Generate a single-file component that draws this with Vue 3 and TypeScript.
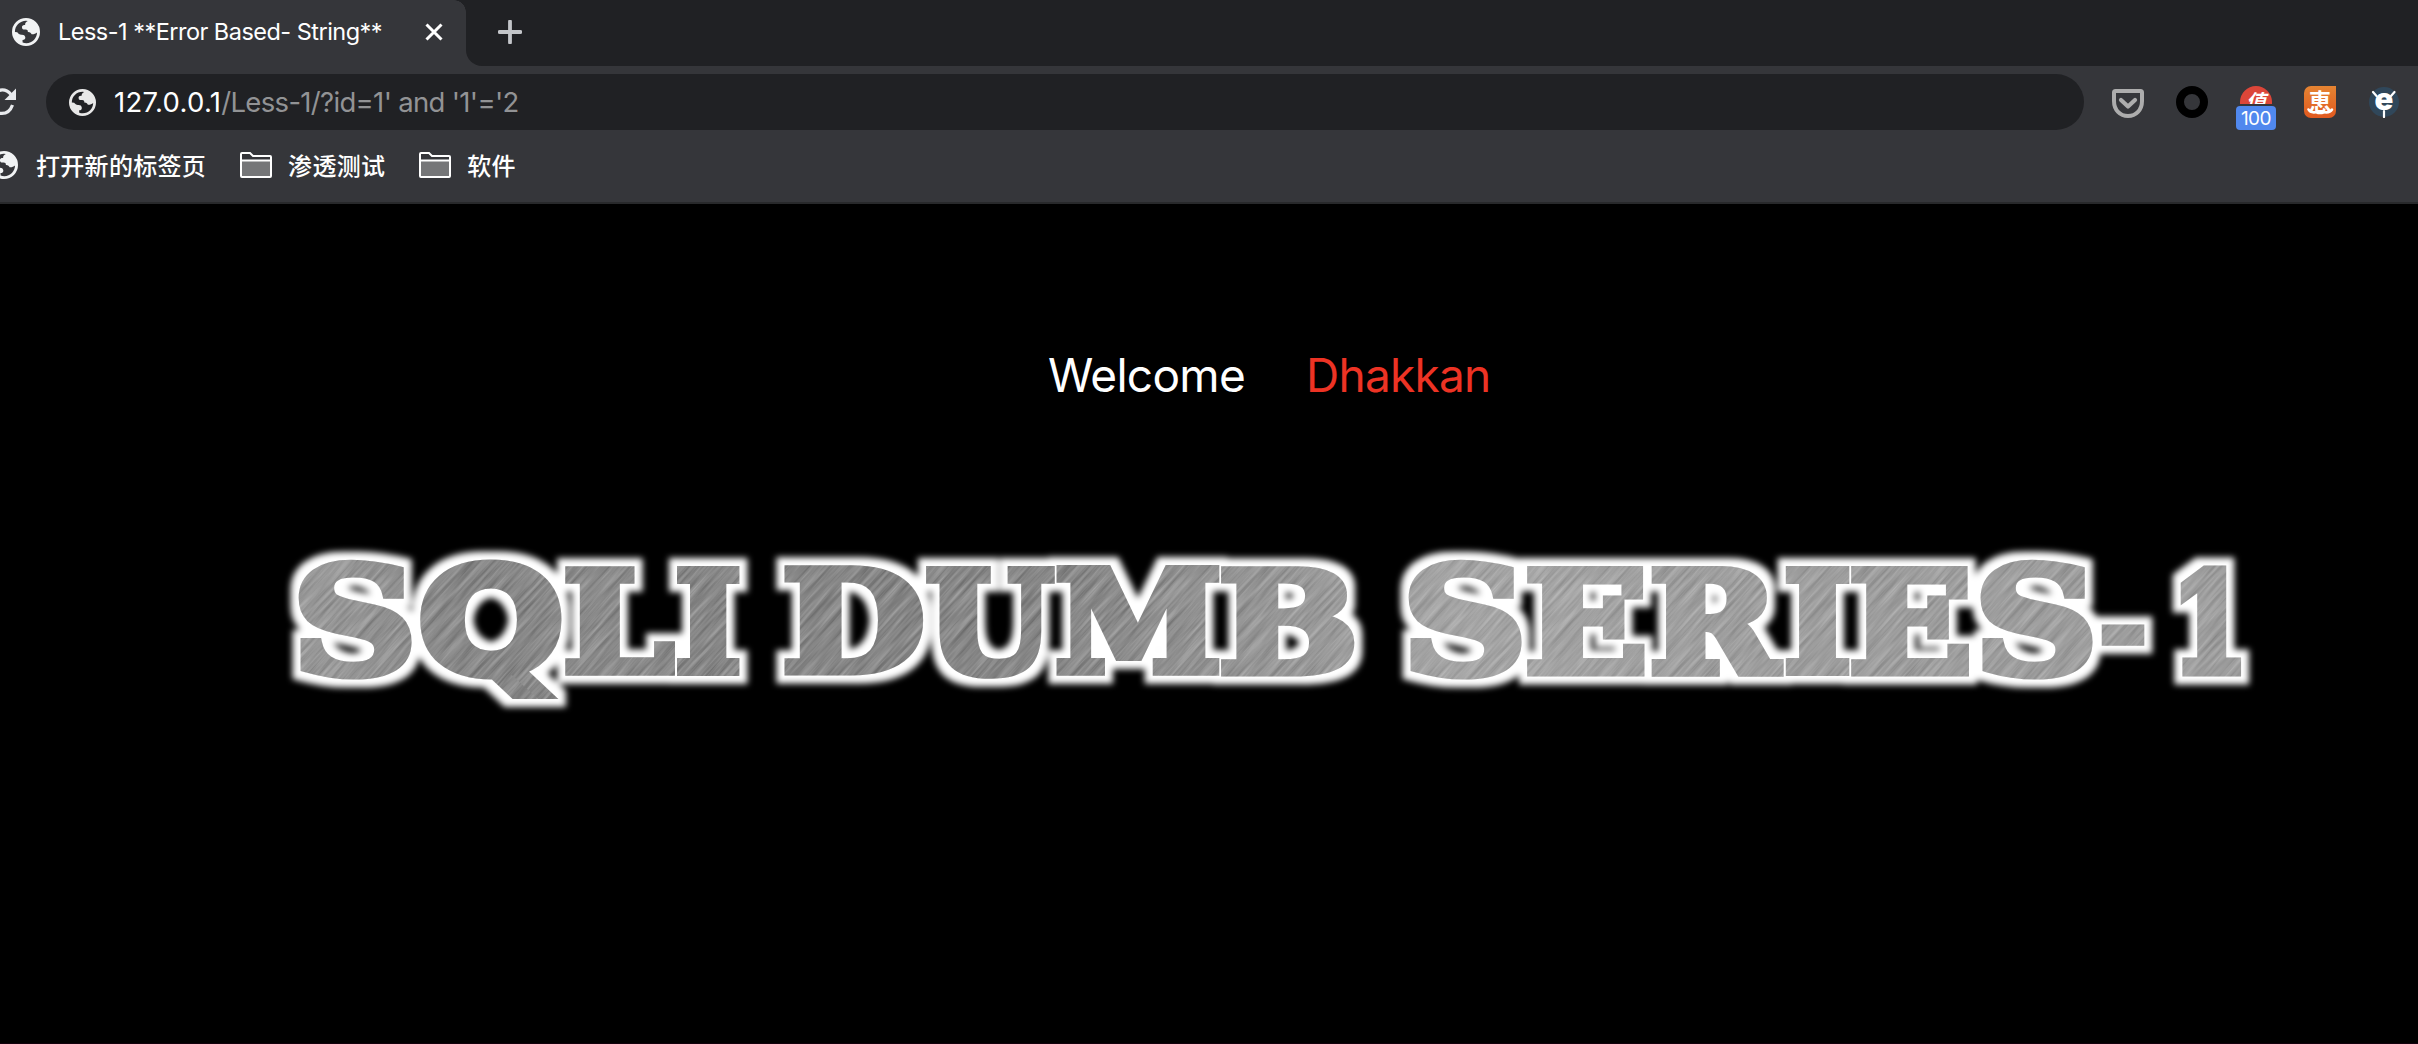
<script setup lang="ts">
interface Glyph { ch: string; x0: number; x1: number; y0: number; y1: number; font?: string }
interface Placed { ch: string; t: string; font: string }

const folders: string[] = ['渗透测试', '软件']

const SERIF = '"DejaVu Serif"'
const SANS = '"DejaVu Sans"'

// Ink box of every banner letter, in banner coordinates
const glyphs: Glyph[] = [
  { ch: 'S', x0: 298, x1: 412, y0: 559, y1: 680 },
  { ch: 'Q', x0: 420, x1: 561, y0: 559, y1: 700, font: SANS },
  { ch: 'L', x0: 565.5, x1: 675.5, y0: 566, y1: 676 },
  { ch: 'I', x0: 677, x1: 740, y0: 566, y1: 676 },
  { ch: 'D', x0: 785, x1: 923, y0: 566, y1: 676 },
  { ch: 'U', x0: 926, x1: 1055, y0: 566, y1: 679 },
  { ch: 'M', x0: 1056.5, x1: 1220, y0: 566, y1: 676 },
  { ch: 'B', x0: 1221.5, x1: 1354.5, y0: 566, y1: 677 },
  { ch: 'S', x0: 1408, x1: 1522, y0: 559, y1: 680 },
  { ch: 'E', x0: 1527.5, x1: 1644.5, y0: 566, y1: 677 },
  { ch: 'R', x0: 1652, x1: 1784, y0: 566, y1: 677 },
  { ch: 'I', x0: 1786, x1: 1850, y0: 566, y1: 676 },
  { ch: 'E', x0: 1851.5, x1: 1969, y0: 566, y1: 677 },
  { ch: 'S', x0: 1980, x1: 2093, y0: 559, y1: 680 },
  { ch: '-', x0: 2102, x1: 2144.5, y0: 624, y1: 646 },
  { ch: '1', x0: 2180, x1: 2242, y0: 566, y1: 676 },
]

const STROKE = 10
const ctx = document.createElement('canvas').getContext('2d')!

function place(g: Glyph): Placed {
  const font = g.font ?? SERIF
  ctx.font = `bold 150px ${font}`
  const m = ctx.measureText(g.ch)
  const left = -m.actualBoundingBoxLeft
  const top = -m.actualBoundingBoxAscent
  const h = STROKE / 2
  const sx = (g.x1 - g.x0 - STROKE) / (m.actualBoundingBoxRight - left)
  const sy = (g.y1 - g.y0 - STROKE) / (m.actualBoundingBoxDescent - top)
  return { ch: g.ch, font, t: `matrix(${sx} 0 0 ${sy} ${g.x0 + h - left * sx} ${g.y0 + h - top * sy})` }
}
const placed: Placed[] = glyphs.map(place)
</script>

<template>
  <div class="window">
    <svg width="0" height="0" class="defs">
      <symbol id="globe" viewBox="2 2 20 20">
        <path fill="currentColor" fill-rule="evenodd" d="M12 2a10 10 0 1 0 0 20a10 10 0 0 0 0-20zM13.300 4.200C11.800 5 11.200 5.900 11.400 7C9.600 6.800 8.800 7.800 9.200 9.200C9.400 10.200 10.300 10.300 11.500 10.200C13 10.100 13.500 10.900 13.300 12C15 11.900 15.600 12.800 16 13.600C17.300 13.800 18.800 13.200 19.900 12.300C19.800 16.400 16.600 19.800 12.300 20C11.300 20 10.400 19.800 9.600 19.500L9.500 17.800C10.900 17.800 11.600 17 11.500 15.800C11.300 14.300 10.200 13.800 8.800 13.900C7.500 14 6.500 13.100 5.800 12.200L4.100 12C4 7.600 7.600 4 12 4z" />
      </symbol>
    </svg>

    <header class="tabs">
      <div class="tab">
        <svg class="g28"><use href="#globe" /></svg>
        <span class="title">Less-1 **Error Based- String**</span>
        <svg class="close" viewBox="0 0 18 18"><path d="M1.500 1.500L16.500 16.500M16.500 1.500L1.500 16.500" stroke="#fff" stroke-width="3" /></svg>
      </div>
      <div class="strip">
        <svg class="plus" viewBox="0 0 24 24"><path d="M12 1.500V22.500M1.500 12H22.500" stroke="#c3c5c9" stroke-width="3.800" stroke-linecap="round" /></svg>
      </div>
    </header>

    <div class="toolbar">
      <svg class="reload" viewBox="0 0 16 30"><path d="M-1 3.500C4 2 8 4 11 7.500M12.500 18C10 25 4.500 27.500-2 26" fill="none" stroke="#e8eaed" stroke-width="3.200" /><path d="M16 1.500V13H4.500z" fill="#e8eaed" /></svg>
      <div class="omnibox">
        <svg class="g27"><use href="#globe" /></svg>
        <span class="url"><b>127.0.0.1</b>/Less-1/?id=1' and '1'='2</span>
      </div>
      <div class="exts">
        <svg viewBox="0 0 32 32"><path d="M3.500 5H28.500Q30 5 30 6.500V15C30 24 24 30 16 30S2 24 2 15V6.500Q2 5 3.500 5z" fill="none" stroke="#adadad" stroke-width="4" /><path d="M9 14L16 20.500L23 14" fill="none" stroke="#adadad" stroke-width="4.200" stroke-linecap="round" stroke-linejoin="round" /></svg>
        <svg viewBox="0 0 32 32"><circle cx="16" cy="16" r="12" fill="none" stroke="#000" stroke-width="8" /></svg>
        <div class="smzdm">
          <span class="disc"><i>值</i></span>
          <span class="badge">100</span>
        </div>
        <div class="hui">
          <span>恵</span>
          <svg viewBox="0 0 32 32"><path d="M4.500 23.500C7 28.500 11 25 14.500 27H18C21 25 25 28.500 28 23.500" fill="none" stroke="#fff" stroke-width="2.600" stroke-linecap="round" /></svg>
        </div>
        <div class="eye">
          <svg viewBox="0 0 32 32"><circle cx="16" cy="16" r="15" fill="#30475a" /><path d="M5 6L8.500 10M26.500 6L23 10M16 25V31" stroke="#fff" stroke-width="2.200" stroke-linecap="round" /></svg>
          <span>e</span>
        </div>
      </div>
    </div>

    <nav class="bookmarks">
      <svg class="g28 cut"><use href="#globe" /></svg>
      <span class="first">打开新的标签页</span>
      <template v-for="f in folders" :key="f">
        <svg class="folder" viewBox="0 0 32 26"><path d="M1 9V24Q1 25 2 25H30Q31 25 31 24V9z" fill="#757678" /><path d="M1 8.500V2Q1 1 2 1H10L13 4H30Q31 4 31 5V24Q31 25 30 25H2Q1 25 1 24V8.500H31" fill="none" stroke="#fff" stroke-width="2" /></svg>
        <span class="name">{{ f }}</span>
      </template>
    </nav>

    <main class="page">
      <p class="welcome"><span class="w">Welcome</span><span class="d">Dhakkan</span></p>
      <svg class="banner" viewBox="270 530 2000 190">
        <defs>
          <linearGradient id="metal" gradientUnits="userSpaceOnUse" x1="290" y1="560" x2="2242" y2="640">
            <stop offset="0" stop-color="#9c9c9c" />
            <stop offset=".09" stop-color="#878787" />
            <stop offset=".17" stop-color="#8a8a8a" />
            <stop offset=".24" stop-color="#868686" />
            <stop offset=".38" stop-color="#868686" />
            <stop offset=".48" stop-color="#939393" />
            <stop offset=".54" stop-color="#9c9c9c" />
            <stop offset=".6" stop-color="#a5a5a5" />
            <stop offset=".75" stop-color="#9d9d9d" />
            <stop offset="1" stop-color="#9d9d9d" />
          </linearGradient>
          <filter id="halo" filterUnits="userSpaceOnUse" x="270" y="530" width="2000" height="190" color-interpolation-filters="sRGB">
            <feMorphology in="SourceAlpha" operator="dilate" radius="8" result="fat" />
            <feGaussianBlur in="fat" stdDeviation="3" result="soft" />
            <feFlood flood-color="#fff" />
            <feComposite in2="soft" operator="in" />
          </filter>
          <filter id="brush" x="0" y="0" width="1" height="1" color-interpolation-filters="sRGB">
            <feTurbulence type="fractalNoise" baseFrequency="0.018 0.32" numOctaves="3" seed="7" />
            <feColorMatrix values="1 0 0 0 0  1 0 0 0 0  1 0 0 0 0  0 0 0 0 1" />
          </filter>
          <g id="letters" stroke-linejoin="miter">
            <text v-for="(p, i) in placed" :key="i" :transform="p.t" class="glyph" :style="{ fontFamily: p.font }">{{ p.ch }}</text>
          </g>
          <mask id="cut" maskUnits="userSpaceOnUse" x="270" y="530" width="2000" height="190">
            <use href="#letters" fill="#fff" stroke="#fff" />
          </mask>
        </defs>
        <use href="#letters" fill="#fff" stroke="#fff" filter="url(#halo)" />
        <g mask="url(#cut)">
          <rect x="270" y="530" width="2000" height="190" fill="url(#metal)" />
          <g class="grain">
            <rect v-for="n in 10" :key="n" :x="-210" :y="-160" width="420" height="320" filter="url(#brush)" :transform="`translate(${170 + n * 200} 625) rotate(-48)`" />
          </g>
        </g>
      </svg>
    </main>
  </div>
</template>

<style>
html, body { margin: 0; background: #000; }
</style>

<style scoped>
.window { width: 2418px; height: 1044px; box-sizing: border-box; border-bottom: 1px solid #12000c; overflow: hidden; display: flex; flex-direction: column; background: #000; color: #fff; font-family: Inter, "Noto Sans CJK SC", sans-serif; }
.defs { position: absolute; }
svg { display: block; flex: none; }
.tabs { height: 66px; flex: none; display: flex; background: #35363a; }
.tab { width: 466px; box-sizing: border-box; padding: 0 22px 2px 12px; display: flex; align-items: center; background: #35363a; position: relative; }
.tab::after { content: ""; position: absolute; right: 0; top: 0; width: 12px; height: 12px; background: radial-gradient(circle at 0 100%, #35363a 11.500px, #202124 12px); }
.g28 { width: 28px; height: 28px; color: #f1f3f4; }
.g27 { width: 27px; height: 27px; color: #e8e8e8; margin-left: 23px; }
.title { margin-left: 18px; width: 346px; font-size: 23.500px; letter-spacing: -0.520px; white-space: nowrap; line-height: 30px; }
.close { width: 18px; height: 18px; margin-left: 21px; }
.strip { flex: 1; background: #202124; border-bottom-left-radius: 16px; display: flex; align-items: center; padding-left: 32px; }
.plus { width: 24px; height: 24px; margin-bottom: 2px; }
.toolbar { height: 72px; flex: none; display: flex; align-items: center; background: #35363a; }
.reload { width: 16px; height: 30px; }
.omnibox { width: 2038px; height: 56px; margin-left: 30px; border-radius: 28px; background: #202124; display: flex; align-items: center; }
.url { margin-left: 18px; font-size: 27.500px; letter-spacing: -0.680px; color: #929395; white-space: nowrap; }
.url b { font-weight: 400; color: #fff; letter-spacing: 0.300px; }
.exts { display: flex; gap: 32px; margin-left: 28px; height: 32px; }
.exts > * { width: 32px; height: 32px; position: relative; }
.disc { display: block; width: 32px; height: 18px; overflow: hidden; border-radius: 16px 16px 0 0; background: #dc4639; }
.disc i { display: block; font: italic 700 20px/29px "Noto Sans CJK TC", sans-serif; text-align: center; }
.badge { position: absolute; left: -4px; top: 20px; width: 40px; height: 24px; border-radius: 4px; background: #5088ee; font-size: 19px; line-height: 26px; text-align: center; letter-spacing: -0.500px; }
.hui { border-radius: 7px 0 7px 7px; background: linear-gradient(#e58432, #e0591f); }
.hui span { display: block; font: 700 23px/29px "Noto Sans CJK JP", sans-serif; text-align: center; }
.hui svg { position: absolute; inset: 0; }
.eye span { position: absolute; inset: -1px 0 0; font: 900 31px/28px Inter, sans-serif; text-align: center; }
.bookmarks { height: 66px; flex: none; display: flex; align-items: center; background: #35363a; border-bottom: 2px solid #28292b; box-sizing: border-box; padding-bottom: 10px; font: 500 24px/30px "Noto Sans CJK SC", sans-serif; letter-spacing: 0.300px; }
.cut { margin-left: -10px; }
.first { margin-left: 18px; }
.name { margin-left: 16px; }
.folder { width: 32px; height: 26px; margin-left: 34px; }
.page { flex: 1; background: #000; display: flex; flex-direction: column; }
.welcome { margin: 143px 0 0 1048px; height: 56px; line-height: 56px; font-size: 46px; display: flex; white-space: nowrap; }
.w { width: 258px; letter-spacing: -0.700px; }
.d { color: #ed3324; letter-spacing: -0.750px; }
.banner { width: 2000px; height: 190px; margin: 127px 0 0 270px; }
.glyph { font: bold 150px "DejaVu Serif", serif; stroke-width: 10px; vector-effect: non-scaling-stroke; }
.grain { opacity: 0.32; mix-blend-mode: overlay; }
</style>
